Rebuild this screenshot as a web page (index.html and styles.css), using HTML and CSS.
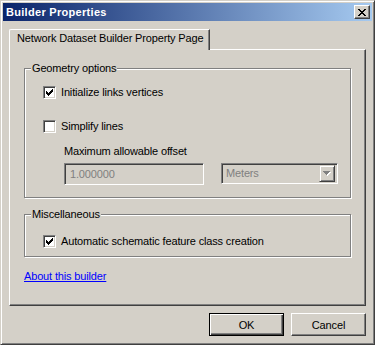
FILE: index.html
```html
<!DOCTYPE html>
<html lang="en">
<head>
    <meta charset="UTF-8">
    <title>Builder Properties</title>
    <link rel="stylesheet" href="styles.css">
</head>
<body>

<div class="window">
    <div class="titlebar">
        <span class="title">Builder Properties</span>
        <button class="close-btn" title="Close">
            <svg width="8" height="7" viewBox="0 0 8 7" shape-rendering="crispEdges">
                <path fill="#000" d="M0 0h2v1H0z M6 0h2v1H6z M1 1h2v1H1z M5 1h2v1H5z M2 2h4v1H2z M3 3h2v1H3z M2 4h4v1H2z M1 5h2v1H1z M5 5h2v1H5z M0 6h2v1H0z M6 6h2v1H6z"/>
            </svg>
        </button>
    </div>

    <div class="dialog-body">
        <div class="tabs">
            <div class="tab active">Network Dataset Builder Property Page</div>
        </div>

        <div class="panel">
            <fieldset class="group geometry">
                <legend>Geometry options</legend>
                <label class="check first">
                    <span class="box checked">
                        <svg width="7" height="7" viewBox="0 0 7 7" shape-rendering="crispEdges"><path fill="#000" d="M0 2h1v1h1v1h1v-1h1v-1h1v-1h1v-1h1v3h-1v1h-1v1h-1v1h-1v1h-1v-1h-1v-1h-1z"/></svg>
                    </span>
                    Initialize links vertices
                </label>
                <label class="check second">
                    <span class="box"></span>
                    Simplify lines
                </label>
                <div class="offset">
                    <div class="offset-label">Maximum allowable offset</div>
                    <div class="offset-row">
                        <div class="textbox disabled">1.000000</div>
                        <div class="combo disabled">
                            <span class="combo-value">Meters</span>
                            <span class="combo-btn">
                                <svg width="8" height="5" viewBox="0 0 8 5" shape-rendering="crispEdges">
                                    <path fill="#fff" transform="translate(1 1)" d="M0 0h7v1h-1v1h-1v1h-1v1h-1v-1h-1v-1h-1v-1H0z"/>
                                    <path fill="#808080" d="M0 0h7v1h-1v1h-1v1h-1v1h-1v-1h-1v-1h-1v-1H0z"/>
                                </svg>
                            </span>
                        </div>
                    </div>
                </div>
            </fieldset>

            <fieldset class="group misc">
                <legend>Miscellaneous</legend>
                <label class="check">
                    <span class="box checked">
                        <svg width="7" height="7" viewBox="0 0 7 7" shape-rendering="crispEdges"><path fill="#000" d="M0 2h1v1h1v1h1v-1h1v-1h1v-1h1v-1h1v3h-1v1h-1v1h-1v1h-1v1h-1v-1h-1v-1h-1z"/></svg>
                    </span>
                    Automatic schematic feature class creation
                </label>
            </fieldset>

            <a class="about-link" href="#">About this builder</a>
        </div>

        <div class="buttons">
            <button class="btn default">OK</button>
            <button class="btn">Cancel</button>
        </div>
    </div>
</div>

</body>
</html>
```

FILE: styles.css
```css
html, body {
    margin: 0;
    padding: 0;
}
body {
    background-color: #d4d0c8;
    font-family: "Liberation Sans", Arial, sans-serif;
    font-size: 11px;
    line-height: 13px;
    letter-spacing: -0.15px;
    color: #000;
}
.window {
    width: 375px;
    height: 345px;
    box-sizing: border-box;
    border: 1px solid;
    border-color: #d4d0c8 #404040 #404040 #d4d0c8;
    box-shadow: inset 1px 1px 0 #fff, inset -1px -1px 0 #808080;
    padding: 2px;
    background-color: #d4d0c8;
}
.titlebar {
    height: 18px;
    display: flex;
    align-items: center;
    justify-content: space-between;
    padding: 0 2px 0 3px;
    background: linear-gradient(to right, #0a246a, #a6caf0);
}
.title {
    color: #fff;
    font-weight: bold;
    letter-spacing: 0.3px;
}
.close-btn {
    width: 16px;
    height: 14px;
    padding: 0;
    display: flex;
    align-items: center;
    justify-content: center;
    background-color: #d4d0c8;
    border: 1px solid;
    border-color: #fff #404040 #404040 #fff;
    box-shadow: inset -1px -1px 0 #808080;
}
.dialog-body {
    padding: 8px 6px 0 6px;
}
.tabs {
    display: flex;
}
.tab {
    position: relative;
    z-index: 1;
    width: 201px;
    box-sizing: border-box;
    margin-bottom: -1px;
    padding: 2px 7px 5px 7px;
    background-color: #d4d0c8;
    border: 1px solid;
    border-bottom: none;
    border-color: #fff #404040 #fff #fff;
    border-top-left-radius: 2px;
    box-shadow: inset -1px 0 0 #808080;
    white-space: nowrap;
}
.panel {
    height: 257px;
    box-sizing: border-box;
    padding: 12px 14px 0 14px;
    border: 1px solid;
    border-color: #fff #404040 #404040 #fff;
    box-shadow: inset -1px -1px 0 #808080;
}
.group {
    margin: 0;
    padding: 0;
    min-width: 0;
    border: 1px solid #808080;
    box-shadow: inset 1px 1px 0 #fff, 1px 1px 0 #fff;
}
.group legend {
    margin-left: 6px;
    padding: 0 1px;
    background-color: #d4d0c8;
}
.geometry {
    padding-bottom: 12px;
}
.misc {
    margin-top: 10px;
    padding-bottom: 8px;
}
.check {
    display: flex;
    align-items: center;
    height: 13px;
    margin-left: 18px;
    gap: 5px;
}
.geometry .check.first {
    margin-top: 11px;
}
.geometry .check.second {
    margin-top: 21px;
}
.misc .check {
    margin-top: 14px;
}
.box {
    width: 13px;
    height: 13px;
    box-sizing: border-box;
    display: flex;
    align-items: center;
    justify-content: center;
    background-color: #fff;
    border: 1px solid;
    border-color: #808080 #fff #fff #808080;
    box-shadow: inset 1px 1px 0 #404040, inset -1px -1px 0 #d4d0c8;
}
.offset {
    margin-left: 39px;
}
.offset-label {
    margin-top: 12px;
}
.offset-row {
    display: flex;
    align-items: flex-start;
    gap: 17px;
    margin-top: 5px;
}
.textbox, .combo {
    box-sizing: border-box;
    border: 1px solid;
    border-color: #808080 #fff #fff #808080;
    box-shadow: inset 1px 1px 0 #404040, inset -1px -1px 0 #d4d0c8;
    background-color: #d4d0c8;
    color: #808080;
}
.textbox {
    width: 140px;
    height: 22px;
    padding: 4px 5px;
}
.combo {
    width: 117px;
    height: 21px;
    display: flex;
    align-items: center;
    justify-content: space-between;
    padding: 2px;
}
.combo-value {
    padding-left: 2px;
}
.combo-btn {
    width: 16px;
    height: 17px;
    box-sizing: border-box;
    display: flex;
    align-items: center;
    justify-content: center;
    border: 1px solid;
    border-color: #d4d0c8 #404040 #404040 #d4d0c8;
    box-shadow: inset 1px 1px 0 #fff, inset -1px -1px 0 #808080;
}
.about-link {
    display: inline-block;
    margin-top: 13px;
    color: #0000ff;
    text-decoration: underline;
}
.buttons {
    display: flex;
    justify-content: flex-end;
    gap: 7px;
    margin-top: 7px;
}
.btn {
    width: 75px;
    height: 23px;
    padding: 0;
    font-family: inherit;
    font-size: 11px;
    letter-spacing: -0.15px;
    color: #000;
    background-color: #d4d0c8;
    border: 1px solid;
    border-color: #fff #404040 #404040 #fff;
    box-shadow: inset -1px -1px 0 #808080;
}
.btn.default {
    border-color: #000;
    box-shadow: inset 1px 1px 0 #fff, inset -1px -1px 0 #404040, inset -2px -2px 0 #808080;
}
```
